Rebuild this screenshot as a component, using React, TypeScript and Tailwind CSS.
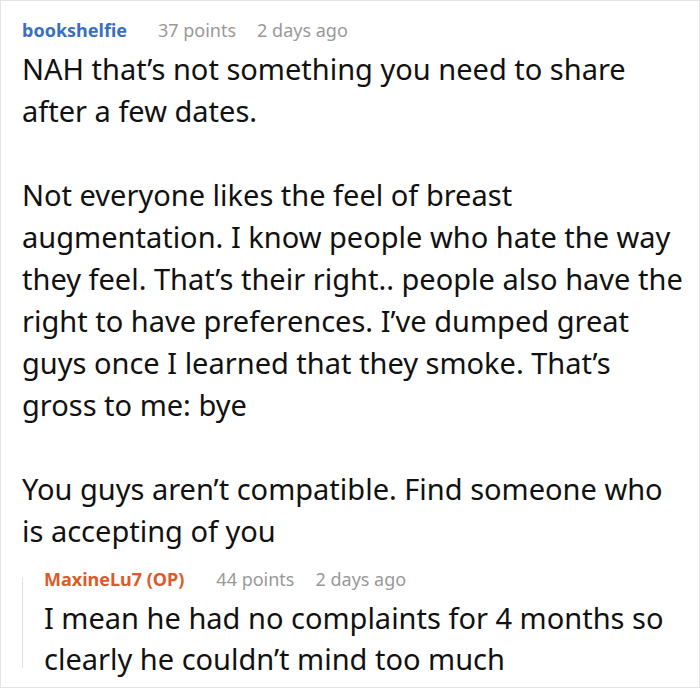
import React from "react";

export default function App() {
  return (
    <div className="w-[700px] h-[688px] bg-white border border-[#e4e4e4] box-border overflow-hidden" style={{ fontFamily: '"Noto Sans", sans-serif' }}>
      <div className="pl-[21px] pr-2 pt-[12px]">
        <div className="flex items-center h-[35px] text-[18px] leading-[35px]">
          <span className="font-bold text-[#3a6fc0]">bookshelfie</span>
          <span className="ml-[31px] text-[#999999]">37 points</span>
          <span className="ml-[21px] text-[#999999]">2 days ago</span>
        </div>
        <div className="text-[29px] leading-[42px] text-[#111111]">
          <p>NAH that’s not something you need to share after a few dates.</p>
          <p className="mt-[42px]">
            Not everyone likes the feel of breast augmentation. I know people who hate the way they feel. That’s their right.. people also have the right to have preferences. I’ve dumped great guys once I learned that they smoke. That’s gross to me: bye
          </p>
          <p className="mt-[42px]">You guys aren’t compatible. Find someone who is accepting of you</p>
        </div>
        <div className="relative mt-[10px] pl-[22px]">
          <span className="absolute left-0 top-[16px] h-[90px] w-px bg-[#e0e0e0]" />
          <div className="flex items-center h-[35px] text-[18px] leading-[35px]">
            <span className="font-bold text-[#dd5a2a]">MaxineLu7 (OP)</span>
            <span className="ml-[32px] text-[#999999]">44 points</span>
            <span className="ml-[21px] text-[#999999]">2 days ago</span>
          </div>
          <p className="text-[29px] leading-[41px] text-[#111111]">
            I mean he had no complaints for 4 months so clearly he couldn’t mind too much
          </p>
        </div>
      </div>
    </div>
  );
}
